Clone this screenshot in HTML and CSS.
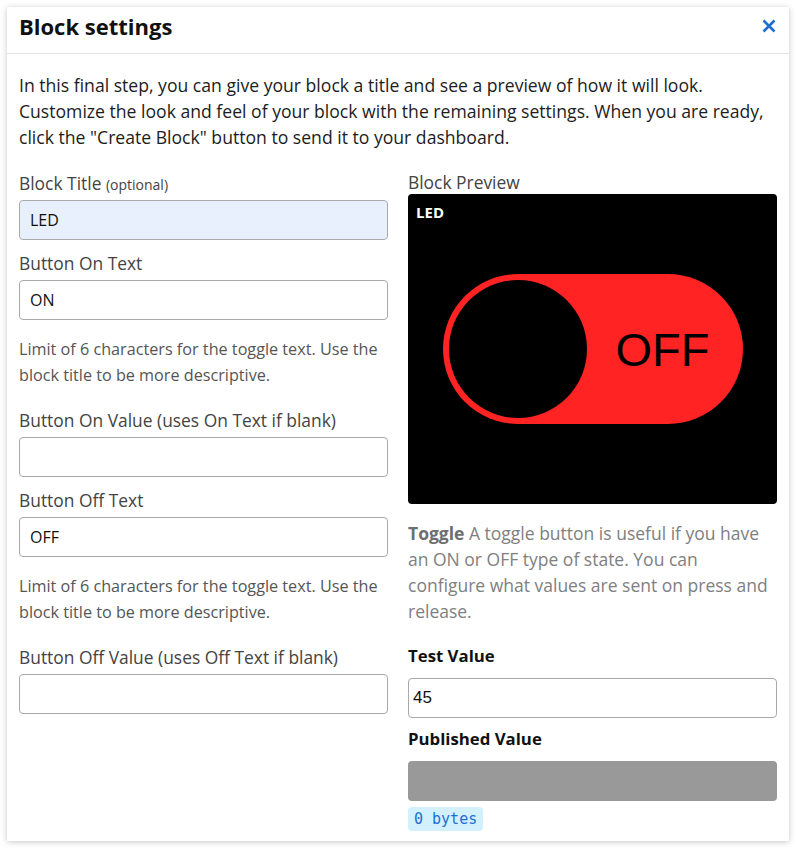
FILE: index.html
```html
<!DOCTYPE html>
<html lang="en">
<head>
<meta charset="utf-8">
<title>Block settings</title>
<link rel="stylesheet" href="styles.css">
</head>
<body>
<div class="modal">
  <div class="modal-header">
    <h2 class="modal-title">Block settings</h2>
    <button class="close" aria-label="Close">
      <svg width="14" height="14" viewBox="0 0 14 14"><path d="M1.5 1.5 L12.5 12.5 M12.5 1.5 L1.5 12.5" stroke="#1a6fd0" stroke-width="2.6" stroke-linecap="butt" fill="none"/></svg>
    </button>
  </div>
  <div class="modal-body">
    <p class="intro">In this final step, you can give your block a title and see a preview of how it will look. Customize the look and feel of your block with the remaining settings. When you are ready, click the "Create Block" button to send it to your dashboard.</p>
    <div class="columns">
      <div class="col">
        <div class="group">
          <label class="field-label">Block Title <small>(optional)</small></label>
          <input class="field autofill" type="text" value="LED">
        </div>
        <div class="group">
          <label class="field-label">Button On Text</label>
          <input class="field" type="text" value="ON">
        </div>
        <p class="help">Limit of 6 characters for the toggle text. Use the block title to be more descriptive.</p>
        <div class="group">
          <label class="field-label">Button On Value (uses On Text if blank)</label>
          <input class="field" type="text" value="">
        </div>
        <div class="group">
          <label class="field-label">Button Off Text</label>
          <input class="field" type="text" value="OFF">
        </div>
        <p class="help">Limit of 6 characters for the toggle text. Use the block title to be more descriptive.</p>
        <div class="group">
          <label class="field-label">Button Off Value (uses Off Text if blank)</label>
          <input class="field" type="text" value="">
        </div>
      </div>
      <div class="col">
        <div class="preview-label">Block Preview</div>
        <div class="preview">
          <div class="preview-title">LED</div>
          <div class="preview-stage">
            <div class="toggle">
              <div class="knob"></div>
              <div class="toggle-text">OFF</div>
            </div>
          </div>
        </div>
        <p class="desc"><strong>Toggle</strong> A toggle button is useful if you have an ON or OFF type of state. You can configure what values are sent on press and release.</p>
        <div class="strong-label">Test Value</div>
        <input class="field test" type="text" value="45">
        <div class="strong-label pub">Published Value</div>
        <div class="published"></div>
        <span class="bytes">0 bytes</span>
      </div>
    </div>
  </div>
</div>
</body>
</html>
```

FILE: styles.css
```css
* { box-sizing: border-box; }
html, body { margin: 0; padding: 0; background: #ffffff; }
body {
  font-family: "Open Sans", "Noto Sans", sans-serif;
  color: #1c1c1c;
  padding: 7px;
}
.modal {
  width: 782px;
  background: #fff;
  box-shadow: 0 1px 6px rgba(0,0,0,0.22);
}
.modal-header {
  height: 47px;
  padding: 0 12px 8px;
  display: flex;
  align-items: center;
  justify-content: space-between;
  border-bottom: 1px solid #e2e2e2;
}
.modal-title {
  margin: 0;
  font-size: 22px;
  font-weight: 700;
  color: #111;
  line-height: 26px;
}
.close {
  border: 0;
  background: transparent;
  padding: 0;
  margin-right: 1px;
  display: flex;
  cursor: pointer;
}
.modal-body {
  padding: 18px 12px 10px;
}
.intro {
  margin: 0 0 20px;
  font-size: 17.6px;
  line-height: 26px;
  color: #1c1c1c;
}
.columns {
  display: grid;
  grid-template-columns: 369px 369px;
  column-gap: 20px;
}
.col { display: flex; flex-direction: column; align-items: stretch; }
.group { margin-bottom: 10px; }
.field-label {
  display: block;
  height: 26px;
  font-size: 17.4px;
  line-height: 26px;
  color: #444;
  margin-bottom: 4px;
}
.field-label small { font-size: 14px; line-height: 1; }
.field {
  display: block;
  width: 100%;
  height: 40px;
  border: 1px solid #a9a9a9;
  border-radius: 4px;
  padding: 0 10px;
  font-family: "Open Sans", sans-serif;
  font-size: 16px;
  color: #111;
  background: #fff;
}
.field.autofill { background: #e8f0fe; }
.help {
  margin: 6px 0 19px;
  font-size: 16.2px;
  line-height: 26px;
  color: #555;
}
.preview-label {
  font-size: 17.4px;
  line-height: 24px;
  color: #444;
}
.preview {
  height: 310px;
  background: #000;
  border-radius: 4px;
  display: flex;
  flex-direction: column;
}
.preview-title {
  color: #fff;
  font-weight: 700;
  font-size: 15px;
  padding: 10px 8px 0;
  line-height: 17px;
}
.preview-stage {
  flex: 1;
  display: flex;
  align-items: center;
  justify-content: center;
  padding-bottom: 27px;
}
.toggle {
  width: 300px;
  height: 150px;
  border-radius: 75px;
  background: #ff2323;
  padding: 6px;
  display: flex;
  align-items: center;
}
.knob {
  width: 138px;
  height: 138px;
  border-radius: 50%;
  background: #000;
  flex: none;
}
.toggle-text {
  flex: 1;
  text-align: center;
  font-family: "Liberation Sans", Arial, sans-serif;
  font-size: 47px;
  color: #000;
  padding-left: 2px;
}
.desc {
  margin: 16px 0 19px;
  font-size: 17.5px;
  line-height: 26px;
  color: #808080;
}
.desc strong { color: #6e6e6e; font-weight: 700; }
.strong-label {
  font-size: 16.8px;
  font-weight: 700;
  line-height: 26px;
  color: #111;
  margin-bottom: 9px;
}
.strong-label.pub { margin-top: 8px; }
.field.test {
  padding: 0 4px;
  font-family: "Liberation Sans", Arial, sans-serif;
  font-size: 17px;
}
.published {
  height: 40px;
  background: #999;
  border-radius: 4px;
}
.bytes {
  align-self: flex-start;
  margin-top: 6px;
  height: 24px;
  line-height: 24px;
  padding: 0 6px;
  border-radius: 4px;
  background: #d3f1fc;
  color: #1f6fcf;
  font-family: "DejaVu Sans Mono", monospace;
  font-size: 15px;
}
```
